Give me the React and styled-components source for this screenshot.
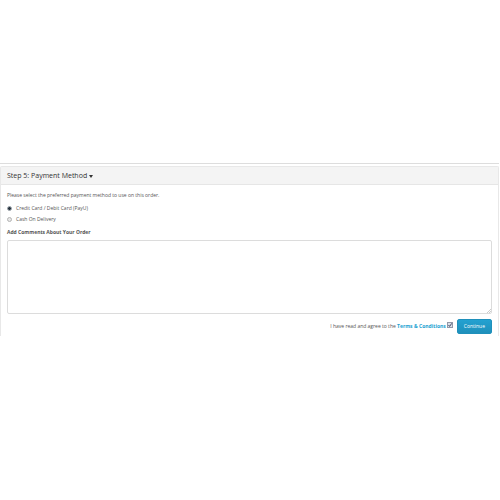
import { useState } from 'react'
import styled, { createGlobalStyle } from 'styled-components'

const GlobalStyle = createGlobalStyle`
    * {
        box-sizing: border-box;
    }

    body {
        margin: 0;
        background: #fff;
        color: #555;
        font-family: "Open Sans", "Noto Sans", sans-serif;
        font-size: 5px;
        line-height: 11px;
    }
`

const Page = styled.main`
    padding: 163px 1px 0 0;
`

const PreviousStep = styled.div`
    height: 3px;
    border-top: 1px solid #ddd;
`

const Panel = styled.section`
    border: 1px solid #e8e8e8;
    border-bottom: none;
    border-radius: 2px 2px 0 0;
`

const PanelHeading = styled.h4`
    margin: 0;
    padding: 1px 6px 0;
    background: #f4f4f4;
    border-bottom: 1px solid #e6e6e6;
    font-size: 7px;
    font-weight: 400;
    line-height: 16px;
`

const StepToggle = styled.button`
    display: flex;
    align-items: center;
    gap: 2px;
    padding: 0;
    border: none;
    background: none;
    color: #333;
    font: inherit;
    cursor: pointer;
`

const Caret = styled.span`
    border-top: 3px solid #333;
    border-left: 2px solid transparent;
    border-right: 2px solid transparent;
`

const PanelBody = styled.form`
    padding: 5px 6px 2px;
`

const Hint = styled.p`
    margin: 0 0 2px;
`

const Option = styled.label`
    display: flex;
    align-items: center;
    gap: 4px;
    width: fit-content;
`

const Radio = styled.input`
    appearance: none;
    width: 5px;
    height: 5px;
    margin: 0;
    border: 1px solid #b4b4b4;
    border-radius: 50%;
    background: #e8e8e8;

    &:checked {
        border-color: #a4abb2;
        background: #26323d;
    }
`

const CommentLabel = styled.label`
    display: block;
    margin: 2px 0 2px;
    font-weight: 700;
`

const Comment = styled.textarea`
    display: block;
    width: 100%;
    height: 74px;
    padding: 3px 6px;
    border: 1px solid #dcdcdc;
    border-radius: 2px;
    color: inherit;
    font: inherit;
    resize: none;
`

const CommentBox = styled.div`
    position: relative;
`

const Grip = styled.svg`
    position: absolute;
    right: 1px;
    bottom: 1px;
    width: 4px;
    height: 4px;
    pointer-events: none;
`

const Actions = styled.div`
    display: flex;
    justify-content: flex-end;
    align-items: center;
    margin-top: 5px;
`

const Terms = styled.label`
    white-space: pre;
`

const TermsLink = styled.a`
    color: #23a1d1;
    font-weight: 700;
    text-decoration: none;
`

const CheckWrap = styled.span`
    position: relative;
    display: flex;
    margin: 0 4px 3px 1px;
`

const Checkbox = styled.input`
    appearance: none;
    width: 6px;
    height: 6px;
    margin: 0;
    border: 1px solid #9298a8;
    background: #dcdfe8;
`

const Tick = styled.svg`
    position: absolute;
    inset: 0;
    width: 100%;
    height: 100%;
    pointer-events: none;
`

const Continue = styled.button`
    height: 15px;
    padding: 0 6px;
    border: 1px solid #1f90bb;
    border-radius: 2px;
    background: linear-gradient(#23a1d1, #1f90bb);
    color: #fff;
    font: inherit;
    cursor: pointer;
`

const methods = [
    { id: 'payu', title: 'Credit Card / Debit Card (PayU)' },
    { id: 'cod', title: 'Cash On Delivery' },
]

function PaymentOption(props){
    return (
        <Option>
            <Radio type="radio" name="payment" checked={props.checked} onChange={props.onChange} />
            {props.title}
        </Option>
    )
}

function App(){
    const [method, setMethod] = useState('payu')
    const [comment, setComment] = useState('')
    const [agree, setAgree] = useState(true)

    return (
        <Page>
            <GlobalStyle />
            <PreviousStep />
            <Panel>
                <PanelHeading>
                    <StepToggle type="button">Step 5: Payment Method <Caret /></StepToggle>
                </PanelHeading>
                <PanelBody onSubmit={(e)=>{e.preventDefault()}}>
                    <Hint>Please select the preferred payment method to use on this order.</Hint>
                    {methods.map((item)=>(
                        <PaymentOption
                            key={item.id}
                            title={item.title}
                            checked={method === item.id}
                            onChange={()=>{setMethod(item.id)}}
                        />
                    ))}
                    <CommentLabel htmlFor="comment">Add Comments About Your Order</CommentLabel>
                    <CommentBox>
                        <Comment id="comment" value={comment} onChange={(e)=>{setComment(e.target.value)}} />
                        <Grip viewBox="0 0 4 4" stroke="#aaa" strokeWidth="0.6">
                            <path d="M0 4 4 0M2 4 4 2" />
                        </Grip>
                    </CommentBox>
                    <Actions>
                        <Terms htmlFor="agree">I have read and agree to the <TermsLink href="#terms">Terms &amp; Conditions</TermsLink></Terms>
                        <CheckWrap>
                            <Checkbox id="agree" type="checkbox" checked={agree} onChange={(e)=>{setAgree(e.target.checked)}} />
                            {agree && (
                                <Tick viewBox="0 0 6 6" fill="none" stroke="#3f4a66" strokeWidth="1">
                                    <path d="M1.5 3 2.6 4.4 4.8 1.3" />
                                </Tick>
                            )}
                        </CheckWrap>
                        <Continue type="submit">Continue</Continue>
                    </Actions>
                </PanelBody>
            </Panel>
        </Page>
    )
}

export default App
